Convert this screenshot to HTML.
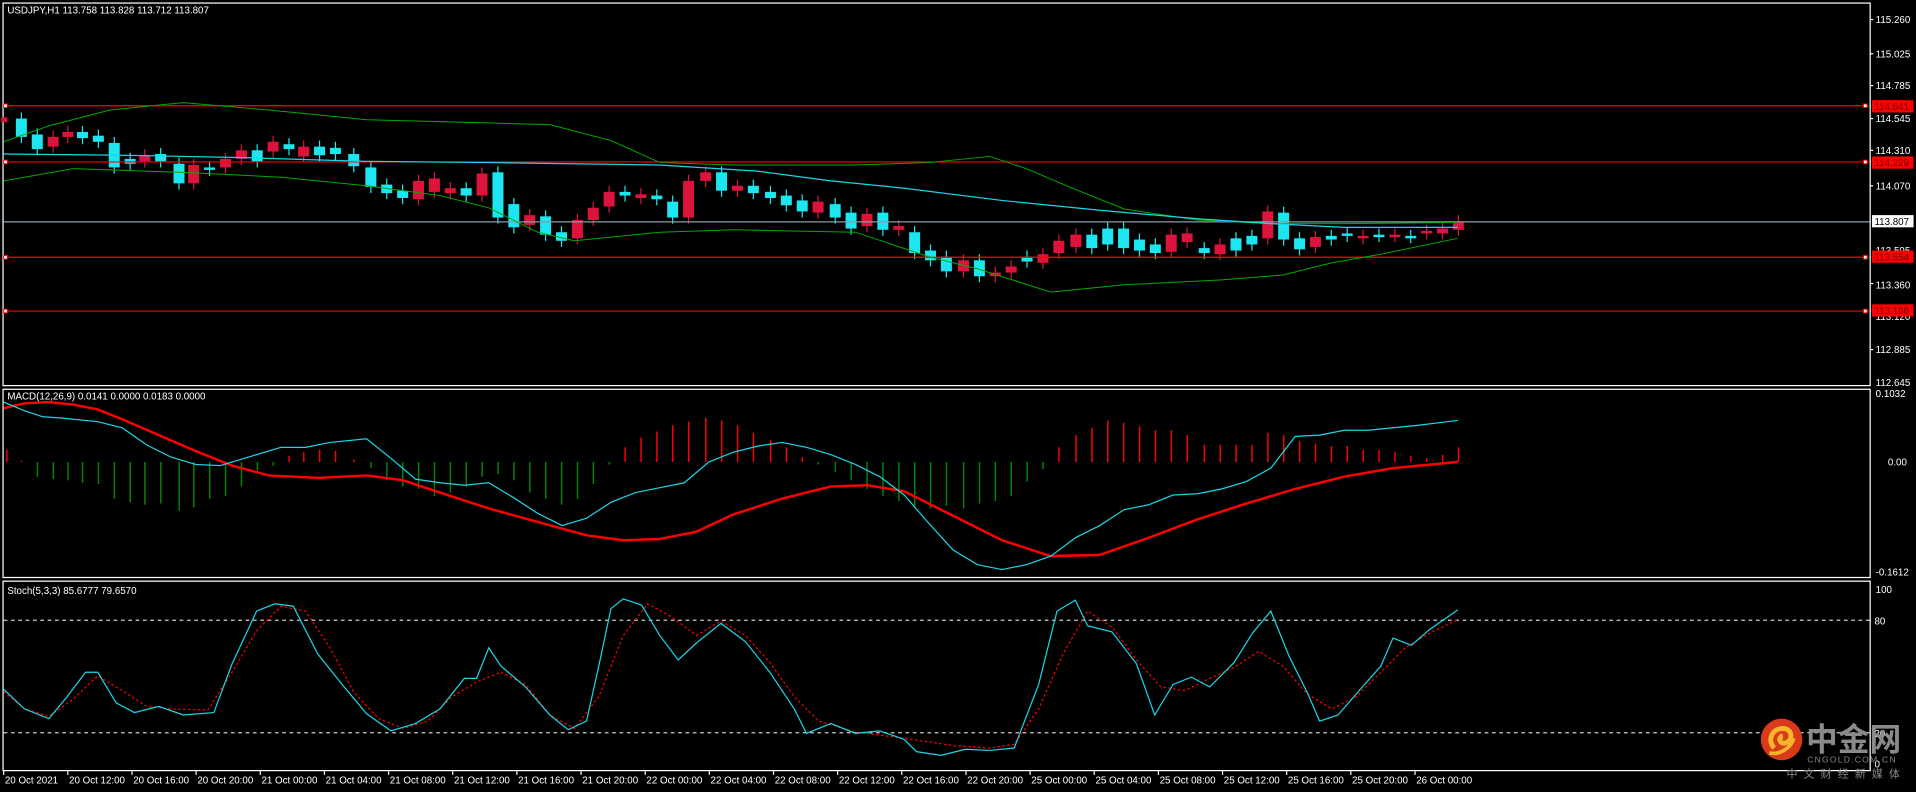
<!DOCTYPE html>
<html><head><meta charset="utf-8"><style>
html,body{margin:0;padding:0;background:#000;width:1916px;height:792px;overflow:hidden}
svg{display:block}
text{font-family:"Liberation Sans",sans-serif;font-size:8px;fill:#fff}
</style></head><body>
<svg id="s" width="1916" height="792" viewBox="0 0 1568 648" preserveAspectRatio="none" xmlns="http://www.w3.org/2000/svg">
<rect width="1568" height="648" fill="#000"/>
<g stroke="#fff" stroke-width="1" fill="none">
<rect x="2.5" y="2.5" width="1528" height="313"/>
<rect x="2.5" y="318.5" width="1528" height="154"/>
<rect x="2.5" y="475.5" width="1528" height="155"/>
</g>
<g id="main"></g>
<!-- hlines -->
<g stroke="#f00" stroke-width="1">
<line x1="3" y1="86.5" x2="1530" y2="86.5"/><line x1="3" y1="132.5" x2="1530" y2="132.5"/>
<line x1="3" y1="210.5" x2="1530" y2="210.5"/><line x1="3" y1="254.5" x2="1530" y2="254.5"/>
</g>
<line x1="3" y1="181.5" x2="1530" y2="181.5" stroke="#8a9aa8"/>
<g fill="#fff" stroke="#f00" stroke-width=".8">
<rect x="3" y="85" width="3" height="3"/><rect x="3" y="131" width="3" height="3"/><rect x="3" y="209" width="3" height="3"/><rect x="3" y="253" width="3" height="3"/>
<rect x="1525" y="85" width="3" height="3"/><rect x="1525" y="131" width="3" height="3"/><rect x="1525" y="209" width="3" height="3"/><rect x="1525" y="253" width="3" height="3"/>
</g>
<!-- axis labels -->
<g>
<text x="1535" y="19">115.260</text><text x="1535" y="47">115.025</text><text x="1535" y="73">114.785</text>
<text x="1535" y="100">114.545</text><text x="1535" y="126">114.310</text><text x="1535" y="155">114.070</text>
<text x="1535" y="208">113.595</text><text x="1535" y="236">113.360</text><text x="1535" y="262">113.120</text>
<text x="1535" y="289">112.885</text><text x="1535" y="316">112.645</text>
<text x="1535" y="325">0.1032</text><text x="1545" y="381">0.00</text><text x="1535" y="471">-0.1612</text>
<text x="1535" y="485">100</text><text x="1534" y="511">80</text><text x="1534" y="603">20</text><text x="1534" y="628">0</text>
</g>
<g stroke="#fff"><line x1="1530" y1="16" x2="1533" y2="16"/><line x1="1530" y1="44" x2="1533" y2="44"/><line x1="1530" y1="70" x2="1533" y2="70"/><line x1="1530" y1="97" x2="1533" y2="97"/><line x1="1530" y1="123" x2="1533" y2="123"/><line x1="1530" y1="152" x2="1533" y2="152"/><line x1="1530" y1="232" x2="1533" y2="232"/><line x1="1530" y1="286" x2="1533" y2="286"/></g>
<rect x="1532" y="82" width="34" height="10" fill="#f00"/><text x="1534" y="90" style="fill:#600">114.641</text>
<rect x="1532" y="128" width="34" height="10" fill="#f00"/><text x="1534" y="136" style="fill:#600">114.229</text>
<rect x="1532" y="176" width="34" height="10" fill="#fff"/><text x="1534" y="184" style="fill:#000">113.807</text>
<rect x="1532" y="205" width="34" height="10" fill="#f00"/><text x="1534" y="213" style="fill:#600">113.554</text>
<rect x="1532" y="249" width="34" height="10" fill="#f00"/><text x="1534" y="257" style="fill:#600">113.166</text>
<text x="6" y="11">USDJPY,H1  113.758 113.828 113.712 113.807</text>
<text x="6" y="327">MACD(12,26,9) 0.0141 0.0000 0.0183 0.0000</text>
<text x="6" y="486">Stoch(5,3,3) 85.6777 79.6570</text>
<!-- bollinger -->
<polyline fill="none" stroke="#0a0" stroke-width=".8" points="3,116 40,103 90,90 150,84 220,90 300,98 380,100 450,102 500,115 540,133 600,135 700,135 760,133 810,128 840,138 880,155 920,171 980,180 1040,183 1100,183 1193,182"/>
<polyline fill="none" stroke="#0a0" stroke-width=".8" points="3,148 60,138 150,141 230,145 300,152 360,160 400,170 440,190 470,197 540,190 600,188 700,190 760,210 800,220 860,239 920,233 1000,229 1050,225 1090,215 1130,208 1193,195"/>
<polyline fill="none" stroke="#1ad6e6" stroke-width="1" points="3,126 100,127 200,129 300,132 400,133 540,135 620,140 680,148 740,154 820,164 900,172 980,179 1040,183 1100,186 1193,186"/>
<g id="macd"></g>
<polyline fill="none" stroke="#f00" stroke-width="2" points="3,334 20,330 40,329 60,331 80,335 100,343 130,356 160,369 190,381 220,389 260,391 300,389 330,393 360,403 400,416 440,427 480,438 510,442 540,441 570,435 600,421 640,408 680,398 710,397 740,402 780,422 820,442 860,455 900,454 940,440 980,425 1020,412 1060,400 1100,390 1140,383 1193,378"/>
<polyline fill="none" stroke="#1ad6e6" stroke-width="1" points="3,329 20,336 35,341 50,342 80,345 100,350 120,364 140,374 160,380 180,381 200,375 230,366 250,366 270,362 300,359 320,375 340,392 360,395 380,397 400,395 420,407 440,420 460,430 480,424 500,411 520,403 540,399 560,395 580,378 600,370 620,365 640,362 660,366 680,372 700,380 720,390 740,405 760,428 780,450 800,462 820,466 840,462 860,455 880,440 900,430 920,417 940,413 960,405 980,404 1000,400 1020,394 1040,383 1060,357 1080,356 1100,352 1120,352 1140,350 1160,348 1193,344"/>
<!-- stoch -->
<g stroke="#ccc" stroke-width="1" stroke-dasharray="3,3"><line x1="3" y1="507.5" x2="1530" y2="507.5"/><line x1="3" y1="599.5" x2="1530" y2="599.5"/></g>
<polyline fill="none" stroke="#f00" stroke-width="1" stroke-dasharray="2,2" points="3,566 20,580 40,586 60,572 80,553 100,565 120,578 140,580 170,581 190,550 210,516 230,496 250,500 270,530 290,567 310,588 330,596 350,590 370,570 390,558 410,550 430,560 450,585 470,596 490,570 510,520 530,494 550,505 570,520 590,508 610,520 630,542 650,570 670,590 700,599 740,604 780,610 810,612 830,609 850,580 870,535 890,500 910,513 930,540 950,562 970,565 990,555 1010,546 1030,533 1050,545 1070,568 1090,580 1110,570 1130,550 1150,530 1170,518 1193,507"/>
<polyline fill="none" stroke="#1ad6e6" stroke-width="1" points="3,564 20,580 40,588 55,570 70,550 80,550 95,575 110,583 130,578 150,585 175,583 190,543 210,500 225,494 240,496 260,535 280,560 300,584 320,598 340,592 360,580 380,555 390,555 400,530 410,545 430,562 450,585 465,597 480,590 490,545 500,498 510,490 525,495 540,520 555,540 570,526 590,510 610,525 630,550 650,580 660,600 680,592 700,600 720,598 740,605 750,615 770,618 790,613 810,614 830,612 850,560 865,500 880,491 890,512 910,517 930,543 945,585 960,560 975,554 990,562 1010,542 1025,518 1040,500 1055,537 1070,567 1080,590 1095,585 1115,562 1130,545 1140,522 1155,528 1170,515 1193,499"/>
<!-- time labels -->
<g id="tl"></g>
<!-- logo -->
<circle cx="1458" cy="605" r="17" fill="#d83a1a"/>
<path d="M1452,612 C1446,606 1450,596 1459,596 C1467,596 1468,606 1461,608 C1456,609 1455,603 1459,602" fill="none" stroke="#f5b52a" stroke-width="4"/>
<path d="M1448,616 C1456,618 1466,612 1468,604" fill="none" stroke="#f5b52a" stroke-width="3"/>
<text x="1478" y="614" style="font-family:'Noto Sans CJK SC',sans-serif;font-size:26px;font-weight:bold;fill:#8a8a8a">中金网</text>
<text x="1479" y="624" style="font-size:7px;fill:#888;letter-spacing:1px">CNGOLD.COM.CN</text>
<text x="1462" y="636" style="font-family:'Noto Sans CJK SC',sans-serif;font-size:9px;fill:#888;letter-spacing:5px">中文财经新媒体</text>
</svg>
<script>
var NS="http://www.w3.org/2000/svg";
function el(p,t,a){var e=document.createElementNS(NS,t);for(var k in a)e.setAttribute(k,a[k]);p.appendChild(e);return e;}
var C=[[17,'c',97,112],[30,'c',110,122],[43,'r',112,120],[55,'r',108,112],[67,'c',108,113],[80,'c',111,116],[93,'c',117,137],[106,'c',130,134],[118,'r',127,132],[131,'c',126,132],[146,'c',134,150],[158,'r',135,150],[171,'c',137,139],[184,'r',130,137],[197,'r',123,130],[210,'c',123,132],[223,'r',116,124],[236,'c',118,122],[248,'r',120,128],[261,'c',120,127],[274,'c',121,126],[289,'c',126,136],[303,'c',137,153],[316,'c',151,158],[329,'c',156,162],[342,'r',148,163],[355,'r',146,157],[368,'r',154,158],[381,'c',154,160],[394,'r',142,160],[407,'c',141,178],[420,'c',167,186],[433,'r',176,184],[446,'c',177,192],[459,'c',190,197],[472,'r',180,195],[485,'r',170,180],[498,'r',157,169],[511,'c',157,160],[524,'r',159,162],[537,'c',160,163],[550,'c',165,178],[563,'r',148,178],[577,'r',141,148],[590,'c',141,156],[603,'r',152,156],[616,'c',152,158],[630,'c',157,162],[643,'c',160,168],[656,'c',164,173],[669,'r',165,174],[683,'c',167,178],[696,'c',174,187],[709,'r',175,185],[722,'c',174,188],[735,'r',185,188],[748,'c',190,207],[761,'c',205,213],[774,'c',210,222],[788,'r',213,222],[801,'c',213,226],[814,'r',223,226],[827,'r',218,223],[840,'c',210,214],[853,'r',208,215],[866,'r',197,207],[880,'r',192,202],[893,'c',192,203],[906,'c',187,200],[919,'c',187,203],[932,'c',196,205],[945,'c',200,207],[958,'r',192,206],[971,'r',191,198],[985,'c',203,207],[998,'r',200,208],[1011,'c',195,205],[1024,'c',193,200],[1037,'r',173,195],[1050,'c',174,196],[1063,'c',195,204],[1076,'r',194,202],[1089,'c',193,196],[1102,'c',191,193],[1115,'r',193,195],[1128,'c',192,193],[1141,'r',192,193],[1154,'c',193,194],[1167,'r',189,191],[1180,'r',187,191],[1193,'r',181,188]];
var m=document.getElementById('main');
C.forEach(function(c){var col=c[1]=='c'?'#1ee6f0':'#dc143c';
el(m,'line',{x1:c[0]+.5,x2:c[0]+.5,y1:c[2]-5,y2:c[3]+5,stroke:col,'stroke-width':1});
el(m,'rect',{x:c[0]-4,y:c[2],width:9,height:Math.max(2,c[3]-c[2]),fill:col});});
el(m,'rect',{x:1,y:96,width:5,height:4,fill:'#dc143c'});
// macd histogram
var H=[[5,-10],[17,-1],[30,12],[43,14],[55,15],[67,17],[80,18],[93,30],[106,33],[118,35],[131,34],[146,40],[158,37],[171,30],[184,28],[197,20],[210,7],[223,3],[236,-5],[248,-8],[261,-10],[274,-9],[289,-2],[303,5],[316,15],[329,20],[342,22],[355,28],[368,25],[381,20],[394,12],[407,10],[420,15],[433,25],[446,30],[459,35],[472,30],[485,18],[498,2],[511,-12],[524,-20],[537,-25],[550,-30],[563,-33],[577,-36],[590,-34],[603,-30],[616,-24],[630,-18],[643,-12],[656,-4],[669,2],[683,8],[696,15],[709,22],[722,28],[735,32],[748,37],[761,38],[774,36],[788,38],[801,34],[814,32],[827,28],[840,16],[853,6],[866,-12],[880,-22],[893,-28],[906,-34],[919,-32],[932,-29],[945,-26],[958,-26],[971,-22],[985,-14],[998,-14],[1011,-14],[1024,-14],[1037,-24],[1050,-22],[1063,-17],[1076,-15],[1089,-13],[1102,-13],[1115,-10],[1128,-10],[1141,-8],[1154,-5],[1167,-3],[1180,-6],[1193,-12]];
var g=document.getElementById('macd');
H.forEach(function(h){var v=h[1];el(g,'rect',{x:h[0],y:v<0?378+v:378,width:1.2,height:Math.abs(v),fill:v<0?'#f00':'#080'});});
var tl=document.getElementById('tl');
var L=["20 Oct 2021","20 Oct 12:00","20 Oct 16:00","20 Oct 20:00","21 Oct 00:00","21 Oct 04:00","21 Oct 08:00","21 Oct 12:00","21 Oct 16:00","21 Oct 20:00","22 Oct 00:00","22 Oct 04:00","22 Oct 08:00","22 Oct 12:00","22 Oct 16:00","22 Oct 20:00","25 Oct 00:00","25 Oct 04:00","25 Oct 08:00","25 Oct 12:00","25 Oct 16:00","25 Oct 20:00","26 Oct 00:00"];
L.forEach(function(s,i){var x=4+i*52.5;var t=el(tl,'text',{x:x,y:641});t.textContent=s;el(tl,'line',{x1:x-1,x2:x-1,y1:631,y2:634,stroke:'#fff'});});
</script>
</body></html>
